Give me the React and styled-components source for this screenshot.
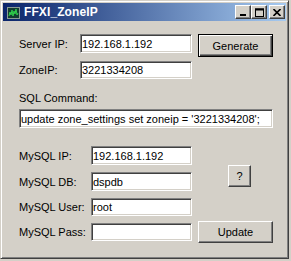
import React from "react";
import styled, { createGlobalStyle } from "styled-components";

const GlobalStyle = createGlobalStyle`
  html, body {
    margin: 0;
    padding: 0;
    background: #d4d0c8;
  }
  body {
    font-family: "Liberation Sans", Arial, sans-serif;
    font-size: 11px;
  }
`;

const Window = styled.div`
  box-sizing: border-box;
  width: 289px;
  height: 259px;
  background: #d4d0c8;
  border: 1px solid;
  border-color: #d4d0c8 #404040 #404040 #d4d0c8;
  box-shadow: inset 1px 1px #ffffff, inset -1px -1px #808080;
  padding: 2px;
  display: flex;
  flex-direction: column;
`;

const TitleBar = styled.div`
  height: 18px;
  display: flex;
  align-items: center;
  padding: 0 1px 0 2px;
  background: linear-gradient(to right, #0a246a, #a6caf0);
`;

const TitleText = styled.span`
  flex: 1;
  margin-left: 3px;
  color: #ffffff;
  font-weight: bold;
  font-size: 12px;
  letter-spacing: 0.1px;
`;

const CaptionButton = styled.button`
  box-sizing: border-box;
  width: 16px;
  height: 14px;
  padding: 0;
  margin-left: ${(p) => (p.$gap ? "2px" : "0")};
  background: #d4d0c8;
  border: 1px solid;
  border-color: #ffffff #404040 #404040 #ffffff;
  box-shadow: inset -1px -1px #808080;
  display: flex;
  align-items: center;
  justify-content: center;
`;

const Client = styled.div`
  flex: 1;
  display: flex;
  flex-direction: column;
  padding: 13px 0 0 16px;
`;

const TopGrid = styled.div`
  display: grid;
  grid-template-columns: 55px 112px 75px;
  grid-template-rows: 19px 18px;
  column-gap: 6px;
  row-gap: 8px;
  align-items: center;
`;

const BottomGrid = styled.div`
  margin-top: 18px;
  display: grid;
  grid-template-columns: 66px 101px 75px;
  grid-template-rows: 19px 19px 18px 18px;
  column-gap: 6px;
  row-gap: 7px;
  align-items: center;
`;

const Label = styled.span`
  grid-column: 1;
  color: #000000;
  white-space: nowrap;
`;

const SqlLabel = styled(Label)`
  margin-top: 13px;
  line-height: 13px;
`;

const TextBox = styled.input`
  grid-column: 2;
  box-sizing: border-box;
  width: ${(p) => p.$width || "100%"};
  height: ${(p) => p.$height || "100%"};
  margin: ${(p) => p.$margin || "0"};
  padding: 0 1px;
  font-family: "Liberation Sans", Arial, sans-serif;
  font-size: 11px;
  color: #000000;
  background: #ffffff;
  border: 1px solid;
  border-color: #808080 #ffffff #ffffff #808080;
  box-shadow: inset 1px 1px #404040, inset -1px -1px #d4d0c8;
  outline: none;
`;

const PushButton = styled.button`
  box-sizing: border-box;
  width: ${(p) => p.$width}px;
  height: ${(p) => p.$height}px;
  padding: 0;
  font-family: "Liberation Sans", Arial, sans-serif;
  font-size: 11px;
  color: #000000;
  background: #d4d0c8;
  border: 1px solid;
  border-color: ${(p) =>
    p.$default ? "#000000" : "#ffffff #404040 #404040 #ffffff"};
  box-shadow: ${(p) =>
    p.$default
      ? "inset 1px 1px #ffffff, inset -1px -1px #404040, inset -2px -2px #808080"
      : "inset -1px -1px #808080"};
  grid-column: 3;
  grid-row: ${(p) => p.$row};
  align-self: ${(p) => p.$align || "center"};
  justify-self: start;
  margin: ${(p) => p.$margin || "0"};
`;

const AppIcon = () => (
  <svg width="16" height="16" viewBox="0 0 16 16">
    <rect x="2.5" y="3.5" width="12" height="11" fill="#123c30" stroke="#8a9a94" />
    <polyline
      points="4,12 5,8 6,11 7,6 8,12 9,7 10,10 11,5 12,11 13,9"
      fill="none"
      stroke="#2fd04a"
      strokeWidth="1"
    />
  </svg>
);

const MinGlyph = () => (
  <svg width="8" height="8" viewBox="0 0 8 8">
    <rect x="1" y="6" width="6" height="2" fill="#000" />
  </svg>
);

const MaxGlyph = () => (
  <svg width="9" height="9" viewBox="0 0 9 9">
    <rect x="0.5" y="1" width="8" height="7.5" fill="none" stroke="#000" />
    <rect x="0" y="0.5" width="9" height="2" fill="#000" />
  </svg>
);

const CloseGlyph = () => (
  <svg width="8" height="7" viewBox="0 0 8 7">
    <path d="M0.5 0 L7.5 7 M7.5 0 L0.5 7" stroke="#000" strokeWidth="1.6" />
  </svg>
);

export default function App() {
  return (
    <>
      <GlobalStyle />
      <Window>
        <TitleBar>
          <AppIcon />
          <TitleText>FFXI_ZoneIP</TitleText>
          <CaptionButton>
            <MinGlyph />
          </CaptionButton>
          <CaptionButton>
            <MaxGlyph />
          </CaptionButton>
          <CaptionButton $gap>
            <CloseGlyph />
          </CaptionButton>
        </TitleBar>
        <Client>
          <TopGrid>
            <Label>Server IP:</Label>
            <TextBox defaultValue="192.168.1.192" />
            <PushButton $default $width={75} $height={23} $row={1} $align="start">
              Generate
            </PushButton>
            <Label>ZoneIP:</Label>
            <TextBox defaultValue="3221334208" />
          </TopGrid>
          <SqlLabel>SQL Command:</SqlLabel>
          <TextBox
            $width="254px"
            $height="19px"
            $margin="4px 0 0 0"
            defaultValue="update zone_settings set zoneip = '3221334208';"
          />
          <BottomGrid>
            <Label>MySQL IP:</Label>
            <TextBox defaultValue="192.168.1.192" />
            <PushButton
              $width={23}
              $height={22}
              $row="1 / 3"
              $align="end"
              $margin="0 0 4px 30px"
            >
              ?
            </PushButton>
            <Label>MySQL DB:</Label>
            <TextBox defaultValue="dspdb" />
            <Label>MySQL User:</Label>
            <TextBox defaultValue="root" />
            <Label>MySQL Pass:</Label>
            <TextBox defaultValue="" />
            <PushButton $width={75} $height={22} $row={4}>
              Update
            </PushButton>
          </BottomGrid>
        </Client>
      </Window>
    </>
  );
}
